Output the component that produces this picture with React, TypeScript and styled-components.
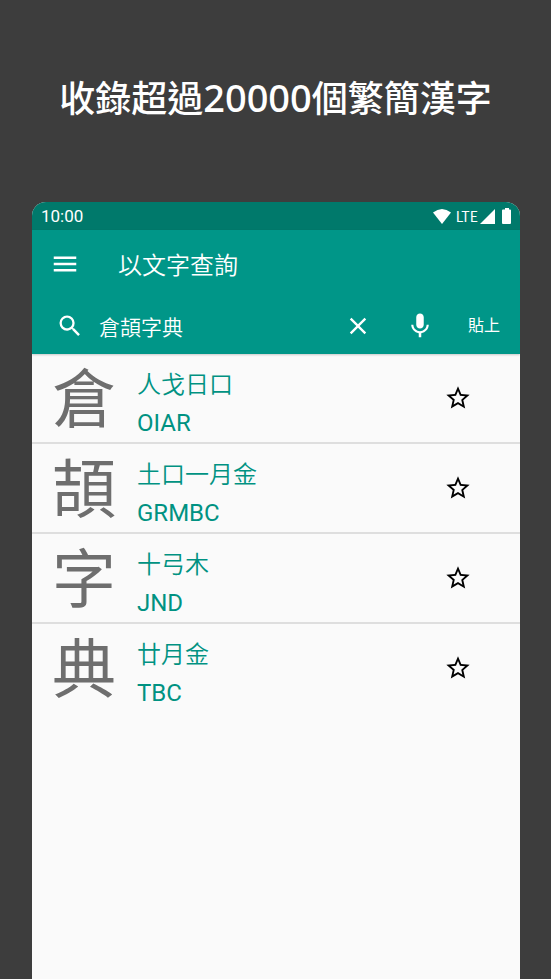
import React, { useState } from "react";
import styled, { createGlobalStyle } from "styled-components";

const GlobalStyle = createGlobalStyle`
  *, *::before, *::after { box-sizing: border-box; }
  body {
    margin: 0;
    background: #3d3d3d;
    font-family: Roboto, "Noto Sans CJK TC", sans-serif;
  }
  button, input { font: inherit; color: inherit; border: 0; background: none; padding: 0; margin: 0; }
  button { cursor: pointer; }
`;

const Page = styled.div`
  min-height: 100vh;
  display: flex;
  flex-direction: column;
  background: #3d3d3d;
`;

const Headline = styled.h1`
  margin: 0;
  padding: 70px 16px 79px;
  text-align: center;
  color: #fff;
  font: 500 36px/52px "Noto Sans CJK TC", sans-serif;
  white-space: nowrap;
`;

const HeadlineNumber = styled.span`
  font-family: "Noto Sans", sans-serif;
  font-size: 38px;
  font-weight: 500;
`;

const Phone = styled.main`
  flex: 1;
  display: flex;
  flex-direction: column;
  margin: 0 31px 0 32px;
  border-radius: 14px 14px 0 0;
  overflow: hidden;
  background: #fafafa;
`;

const StatusBar = styled.div`
  display: flex;
  align-items: center;
  justify-content: space-between;
  height: 28px;
  padding: 0 9px;
  background: #00796b;
  color: #fff;
  font-size: 17px;
  line-height: 28px;
`;

const StatusIcons = styled.div`
  display: flex;
  align-items: center;
`;

const Network = styled.span`
  margin: 0 2px 0 5px;
  font-family: "Noto Sans CJK TC", sans-serif;
  font-size: 14px;
  line-height: 20px;
`;

const Header = styled.header`
  position: relative;
  background: #009688;
  color: #fff;
  box-shadow: 0 1px 2px rgba(0, 0, 0, 0.2);
`;

const TitleBar = styled.div`
  display: flex;
  align-items: center;
  gap: 38px;
  height: 67px;
  padding-left: 18px;
`;

const Title = styled.h2`
  margin: 0;
  font-family: "Noto Sans CJK TC", sans-serif;
  font-size: 24px;
  line-height: 36px;
  font-weight: 350;
`;

const SearchBar = styled.form`
  display: flex;
  align-items: center;
  height: 57px;
  padding: 0 20px 0 24px;
`;

const SearchInput = styled.input`
  flex: 1;
  min-width: 0;
  height: 32px;
  margin-left: 15px;
  font-family: "Noto Sans CJK TC", sans-serif;
  font-size: 21px;
  font-weight: 350;
  outline: none;
`;

const IconButton = styled.button`
  display: flex;
  flex: none;
`;

const SearchActions = styled.div`
  display: flex;
  align-items: center;
  gap: 33px;
`;

const PasteButton = styled.button`
  font-size: 16px;
  line-height: 24px;
`;

const Results = styled.ul`
  margin: 0;
  padding: 0;
  list-style: none;
`;

const Result = styled.li`
  display: flex;
  align-items: center;
  height: 90px;
  padding: 0 48px 0 20px;
  border-bottom: 2px solid #dedede;
  &:last-child { border-bottom-color: transparent; }
`;

const Character = styled.span`
  width: 85px;
  padding-top: 6px;
  font-size: 64px;
  line-height: 80px;
  color: #6e6e6e;
`;

const Codes = styled.div`
  flex: 1;
  padding-top: 12px;
  color: #009282;
  font-size: 24px;
  line-height: 38px;
`;

const Code = styled.div`
  height: 38px;
`;

const Roots = styled(Code)`
  font-weight: 350;
  font-family: Roboto, "Noto Sans CJK TC DemiLight", "Noto Sans CJK TC", sans-serif;
`;

type IconProps = { d: string; size?: number };
const Icon = ({ d, size = 28 }: IconProps) => (
  <svg width={size} height={size} viewBox="0 0 24 24" fill="currentColor" aria-hidden="true">
    <path d={d} />
  </svg>
);

const MENU = "M3 18h18v-2H3v2zm0-5h18v-2H3v2zm0-7v2h18V6H3z";
const SEARCH =
  "M15.5 14h-.79l-.28-.27A6.471 6.471 0 0 0 16 9.5 6.5 6.5 0 1 0 9.5 16c1.61 0 3.09-.59 4.23-1.57l.27.28v.79l5 4.99L20.49 19l-4.99-5zm-6 0C7.01 14 5 11.99 5 9.5S7.01 5 9.5 5 14 7.01 14 9.5 11.99 14 9.5 14z";
const CLOSE =
  "M19 6.41L17.59 5 12 10.59 6.41 5 5 6.41 10.59 12 5 17.59 6.41 19 12 13.41 17.59 19 19 17.59 13.41 12z";
const MIC =
  "M12 14c1.66 0 2.99-1.34 2.99-3L15 5c0-1.66-1.34-3-3-3S9 3.34 9 5v6c0 1.66 1.34 3 3 3zm5.3-3c0 3-2.54 5.1-5.3 5.1S6.7 14 6.7 11H5c0 3.41 2.72 6.23 6 6.72V21h2v-3.28c3.28-.48 6-3.3 6-6.72h-1.7z";
const STAR =
  "M22 9.24l-7.19-.62L12 2 9.19 8.63 2 9.24l5.46 4.73L5.82 21 12 17.27 18.18 21l-1.63-7.03L22 9.24zM12 15.4l-3.76 2.27 1-4.28-3.32-2.88 4.38-.38L12 6.1l1.71 4.04 4.38.38-3.32 2.88 1 4.28L12 15.4z";

const entries = [
  { char: "倉", roots: "人戈日口", keys: "OIAR" },
  { char: "頡", roots: "土口一月金", keys: "GRMBC" },
  { char: "字", roots: "十弓木", keys: "JND" },
  { char: "典", roots: "廿月金", keys: "TBC" },
];

export default function App() {
  const [query, setQuery] = useState("倉頡字典");
  return (
    <Page lang="zh-Hant">
      <GlobalStyle />
      <Headline>
        收錄超過<HeadlineNumber>20000</HeadlineNumber>個繁簡漢字
      </Headline>
      <Phone>
        <StatusBar>
          <span>10:00</span>
          <StatusIcons>
            <svg width="18" height="15" viewBox="0 0 18 15" fill="currentColor" aria-hidden="true">
              <path d="M0 3.6Q9-3.4 18 3.6L9 15z" />
            </svg>
            <Network>LTE</Network>
            <svg width="31" height="16" viewBox="0 0 31 16" fill="currentColor" aria-hidden="true">
              <path d="M15 1v15H0z" />
              <path d="M25 0h4v1.500h1q1 0 1 1V15q0 1-1 1h-7q-1 0-1-1V2.500q0-1 1-1h2z" />
            </svg>
          </StatusIcons>
        </StatusBar>
        <Header>
          <TitleBar>
            <IconButton type="button" aria-label="選單"><Icon d={MENU} size={30} /></IconButton>
            <Title>以文字查詢</Title>
          </TitleBar>
          <SearchBar onSubmit={(e: React.FormEvent) => e.preventDefault()}>
            <IconButton type="submit" aria-label="搜尋"><Icon d={SEARCH} /></IconButton>
            <SearchInput
              aria-label="查詢文字"
              value={query}
              onChange={(e) => setQuery(e.target.value)}
            />
            <SearchActions>
              <IconButton type="button" aria-label="清除" onClick={() => setQuery("")}><Icon d={CLOSE} /></IconButton>
              <IconButton type="button" aria-label="語音輸入"><Icon d={MIC} size={30} /></IconButton>
              <PasteButton type="button">貼上</PasteButton>
            </SearchActions>
          </SearchBar>
        </Header>
        <Results>
          {entries.map((entry) => (
            <Result key={entry.char}>
              <Character>{entry.char}</Character>
              <Codes>
                <Roots>{entry.roots}</Roots>
                <Code>{entry.keys}</Code>
              </Codes>
              <IconButton type="button" aria-label={`收藏 ${entry.char}`}><Icon d={STAR} /></IconButton>
            </Result>
          ))}
        </Results>
      </Phone>
    </Page>
  );
}
